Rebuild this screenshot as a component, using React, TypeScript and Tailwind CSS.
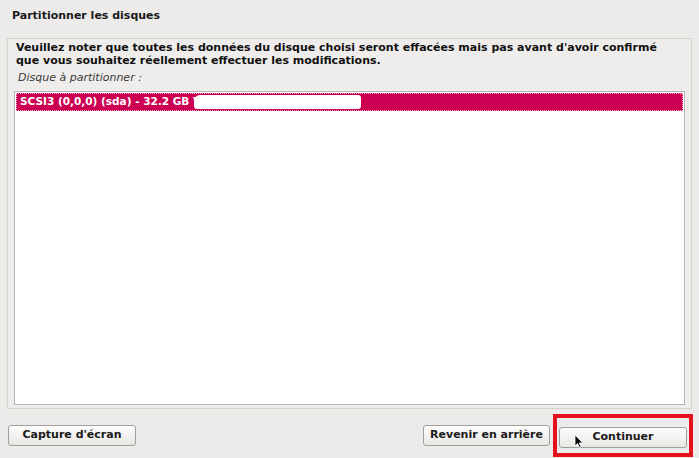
import React from "react";

const font = { fontFamily: '"DejaVu Sans", "Liberation Sans", sans-serif' };

function Cursor() {
  return (
    <svg width="10" height="14" viewBox="0 0 10 14" className="absolute left-[14px] top-[6px]">
      <path d="M1 1 L1 12 L3.6 9.6 L5.6 13.6 L7.2 12.8 L5.2 8.9 L8.8 8.9 Z" fill="#000" stroke="#fff" strokeWidth="0.8" />
    </svg>
  );
}

function Btn({ children, className = "" }: { children: React.ReactNode; className?: string }) {
  return (
    <button
      className={`relative h-[21px] rounded-[3px] border border-[#a09e9b] bg-gradient-to-b from-[#fdfdfc] to-[#e9e7e4] text-[11px] font-bold text-[#1a1a1a] shadow-[inset_0_1px_0_#fff] ${className}`}
    >
      {children}
    </button>
  );
}

export default function App() {
  return (
    <div className="flex h-[458px] w-[699px] flex-col bg-[#edebe9] text-[#1a1a1a]" style={font}>
      {/* titre */}
      <div className="px-[12px] pt-[8px] text-[11px] font-bold leading-[16px]">Partitionner les disques</div>

      {/* panneau */}
      <div className="mx-[7px] mt-[14px] flex h-[371px] flex-col border border-[#d6d3cf] bg-[#efedeb] px-[6px] pt-[2px] pb-[3px]">
        <p className="pl-[2px] text-[11px] font-bold leading-[13px] text-[#111]">
          Veuillez noter que toutes les données du disque choisi seront effacées mais pas avant d'avoir confirmé
          <br />
          que vous souhaitez réellement effectuer les modifications.
        </p>
        <div className="mt-[4px] pl-[4px] text-[11px] italic leading-[14px] text-[#3a3a3a]">Disque à partitionner :</div>

        <div className="mt-[6px] flex-1 border border-[#b9b5b0] bg-white p-px">
          <div className="relative flex h-[18px] items-center bg-[#cc0052] pl-[4px] text-[10.5px] font-bold text-white outline-1 outline-dotted outline-[#f4b0c8] -outline-offset-1">
            SCSI3 (0,0,0) (sda) - 32.2 GB V
            <div className="absolute left-[178px] top-[2px] h-[14px] w-[167px] rounded-[3px] rounded-tl-[6px] bg-white" />
          </div>
        </div>
      </div>

      {/* boutons */}
      <div className="mt-auto flex items-center pl-[8px] pr-[6px] pb-[1px]">
        <Btn className="w-[128px]">Capture d'écran</Btn>
        <div className="flex-1" />
        <Btn className="w-[127px]">Revenir en arrière</Btn>
        <div className="ml-[3px] border-[4px] border-[#e4101c] px-[2px] py-[5px]">
          <Btn className="w-[128px]">
            <Cursor />
            Continuer
          </Btn>
        </div>
      </div>
    </div>
  );
}
